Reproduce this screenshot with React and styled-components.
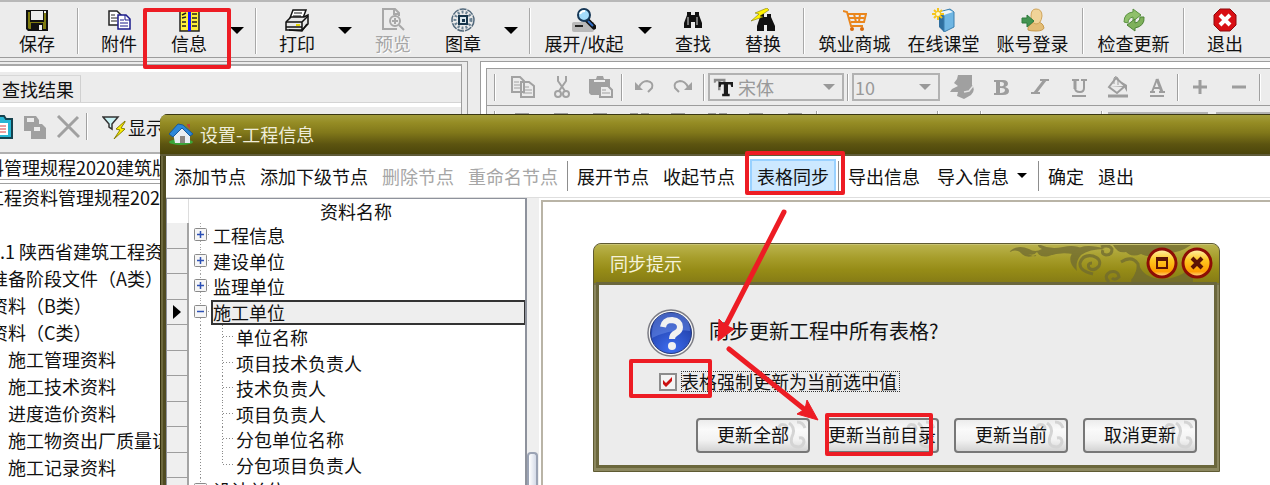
/**
 * Project archive editor with the "project info" settings window
 * and the table sync prompt opened on top of it
 */

import React, { useState } from 'react';
import styled, { createGlobalStyle, ThemeProvider, css } from 'styled-components';

const theme = {
  face: '#ececec',
  text: '#111111',
  muted: '#a6a6a6',
  line: '#9c9c9c',
  mark: '#ed1c24'
};

const GlobalStyle = createGlobalStyle`
  * {
    box-sizing: border-box;
  }

  body {
    margin: 0;
    background: ${theme.face};
  }

  body, button, select, input {
    font-family: "Noto Sans CJK SC", sans-serif;
    font-size: 18px;
    line-height: 22px;
    color: ${theme.text};
  }

  button {
    border: 0;
    padding: 0;
    background: none;
    white-space: nowrap;
  }

  svg {
    flex-shrink: 0;
  }
`;

const Desktop = styled.div`
  position: relative;
  display: flex;
  flex-direction: column;
  height: 100vh;
  overflow: hidden;
  background: ${props => props.theme.face};
`;

/* ---------- main toolbar ---------- */

const MainToolbar = styled.header`
  display: flex;
  flex-shrink: 0;
  padding: 6px 2px 3px;
  border-top: 2px solid #b8b8b8;
  border-bottom: 1px solid ${props => props.theme.line};
`;

const ToolButton = styled.button`
  display: flex;
  flex-direction: column;
  align-items: center;
  flex: 0 0 ${props => (props.$wide ? 89 : 70)}px;
  color: ${props => (props.disabled ? props.theme.muted : props.theme.text)};
  text-shadow: ${props => (props.disabled ? '1px 1px 0 #fff' : 'none')};
`;

const ExpandButton = styled(ToolButton)`
  flex-basis: 96px;
`;

const DropButton = styled.button`
  display: flex;
  align-items: center;
  justify-content: center;
  flex: 0 0 26px;
  height: 44px;
`;

const ToolSeparator = styled.span`
  flex: 0 0 2px;
  height: 46px;
  margin: 0 5px;
  background: #a8a8a8;
  border-right: 1px solid #fff;
`;

/* ---------- workspace behind the window ---------- */

const Workspace = styled.div`
  display: flex;
  flex: 1;
  min-height: 0;
  margin-top: 3px;
`;

const SidePanel = styled.aside`
  flex: 0 0 468px;
  display: flex;
  border: 1px solid ${props => props.theme.line};
  border-width: 1px 1px 0 0;
  padding: 2px 5px 0 0;
`;

const SideInner = styled.div`
  flex: 1;
  min-width: 0;
  border: 1px solid ${props => props.theme.line};
  border-width: 1px 1px 0 0;
  border-top: 2px solid #a8a8a8;
  padding-top: 6px;
  background: #fff;
`;

const TabRow = styled.div`
  display: flex;
  align-items: flex-end;
  height: 31px;
  background: ${props => props.theme.face};
  border-bottom: 1px solid #d4d4d4;
`;

const Tab = styled.button`
  width: 81px;
  height: 27px;
  padding-left: 2px;
  text-align: left;
  border-top: 1px solid #d8d8d8;
  border-right: 1px solid #d0d0d0;
`;

const SideTools = styled.div`
  display: flex;
  align-items: center;
  height: 47px;
  margin-top: 4px;
  padding-bottom: 6px;
  background: ${props => props.theme.face};
  border-bottom: 2px solid #b0b0b0;
`;

const SideTool = styled.button`
  display: flex;
  align-items: center;
  flex: 0 0 ${props => props.$width}px;
  gap: 2px;
`;

const FilterTool = styled(SideTool)`
  margin-left: 13px;
`;

const ClipWrap = styled.span`
  display: flex;
  justify-content: flex-end;
  width: 13px;
  overflow: hidden;
`;

const ThinSeparator = styled.span`
  flex: 0 0 4px;
  height: 27px;
  background: linear-gradient(to right, transparent 1px, #a0a0a0 1px, #a0a0a0 2px, #fff 2px, #fff 3px, transparent 3px);
`;

const CurrentBook = styled.div`
  height: 26px;
  line-height: 26px;
  text-indent: -14px;
  white-space: nowrap;
  border-bottom: 1px solid #a0a0a0;
`;

const ArchiveTree = styled.ul`
  list-style: none;
  margin: 3px 0 0;
  padding: 0;
  border-top: 1px solid #a0a0a0;
`;

const ArchiveItem = styled.li`
  height: 27px;
  line-height: 26px;
  text-indent: ${props => props.$indent}px;
  white-space: nowrap;
`;

const EditorPanel = styled.main`
  flex: 1;
  min-width: 0;
  margin-left: 12px;
  padding: 6px 0 0 5px;
  border: 1px solid ${props => props.theme.line};
  border-width: 1px 0 0 1px;
  background: #fff;
`;

const FormatBar = styled.div`
  display: flex;
  align-items: center;
  height: 37px;
  padding-left: 6px;
  overflow: hidden;
  border-top: 1px solid ${props => props.theme.line};
  border-left: 1px solid ${props => props.theme.line};
  background: ${props => props.theme.face};
`;

const Grip = styled(ThinSeparator)`
  margin-right: 6px;
`;

const FormatButton = styled.button`
  display: flex;
  justify-content: center;
  flex: 0 0 39px;
  color: #9d9d9d;
`;

const SelectBox = styled.label`
  display: flex;
  align-items: center;
  flex: 0 0 ${props => props.$width}px;
  height: 28px;
  margin: 0 2px;
  padding: 0 7px 0 ${props => props.$inset}px;
  border: 2px solid #b2b2b2;
  color: #999;
`;

const Select = styled.select`
  flex: 1;
  min-width: 0;
  margin-left: ${props => props.$gap}px;
  padding: 0;
  border: 0;
  appearance: none;
  background: none;
  color: #999;
  opacity: 1;
`;

const BlankField = styled.span`
  flex: 0 0 100px;
  height: 24px;
  margin: 0 4px;
  border: 2px solid #b2b2b2;
  background: #fff;
`;

/* ---------- settings window ---------- */

const SettingsWindow = styled.section`
  position: absolute;
  top: 114px;
  left: 160px;
  right: 0;
  bottom: 0;
  display: flex;
  flex-direction: column;
  overflow: hidden;
  padding-left: 6px;
  border-radius: 8px 0 0 0;
  background: linear-gradient(to right, #35310f 1px, #6d693f 1px, #6d693f 3px, #504c22 3px);
`;

const SettingsTitle = styled.h1`
  display: flex;
  align-items: center;
  gap: 7px;
  flex: 0 0 42px;
  margin: 0 0 0 -6px;
  padding: 0 0 2px 9px;
  font-size: 18px;
  font-weight: 400;
  color: #efedda;
  border-top: 1px solid #3a3712;
  border-bottom: 2px solid #5f5b38;
  background: linear-gradient(#a39d3c, #958c24 20%, #81781a 45%, #5c5410 75%, #4b450b);
`;

const SettingsTools = styled.nav`
  display: flex;
  align-items: center;
  flex: 0 0 42px;
  padding: 0 1px 2px;
  background: #fff;
  border-bottom: 1px solid #dedede;
`;

const NodeButton = styled.button`
  height: 33px;
  padding: 0 7px;
  flex-shrink: 0;
  color: ${props => (props.disabled ? props.theme.muted : props.theme.text)};

  ${props => props.$active && css`
    margin-left: 8px;
    background: #cce8ff;
    border: 2px solid #99d1ff;
    padding: 0 5px;
  `}
`;

const MenuButton = styled(NodeButton)`
  display: flex;
  align-items: center;
  gap: 8px;
  padding: 0 9px 0 10px;
`;

const NodeSeparator = styled.span`
  flex: 0 0 1px;
  height: 30px;
  margin: 0 2px;
  background: #8d8d8d;
`;

const SettingsBody = styled.div`
  display: flex;
  flex: 1;
  min-height: 0;
  background: #fff;
`;

const NodePanel = styled.div`
  flex: 0 0 361px;
  border-top: 1px solid #8e929c;
  border-right: 2px solid #8e929c;
  border-left: 1px solid #8e929c;
`;

const NodeHeader = styled.div`
  height: 24px;
  margin-left: 21px;
  padding-right: 2px;
  border-left: 1px solid #ddd;
  line-height: 24px;
  text-align: center;
`;

const NodeList = styled.ul`
  list-style: none;
  margin: 0;
  padding: 0;
`;

const NodeRow = styled.li`
  display: flex;
  align-items: stretch;
  height: 26px;

  &:nth-child(even) {
    height: 25px;
  }
`;

const RowMarker = styled.span`
  display: flex;
  align-items: center;
  justify-content: center;
  flex: 0 0 22px;
  background: #efefef;
  border-right: 2px solid #a4a4a4;
  border-bottom: 1px solid #9e9e9e;
`;

const Guide = styled.span`
  display: flex;
  flex: 0 0 ${props => (props.$child ? 45 : 22)}px;
  overflow: hidden;
`;

const NodeLabel = styled.span`
  flex: 1;
  line-height: 20px;
  white-space: nowrap;
  border: 2px solid ${props => (props.$selected ? '#333' : 'transparent')};
  border-width: 2px 1px 2px 2px;
  background: ${props => (props.$selected ? '#eeeeee' : 'transparent')};
`;

const Splitter = styled.div`
  display: flex;
  align-items: flex-end;
  flex: 0 0 12px;
  background: #efefef;
`;

const ScrollThumb = styled.span`
  width: 11px;
  height: 33px;
  border: 2px solid #9ba3b4;
  border-bottom: 0;
  border-radius: 4px 4px 0 0;
  background: linear-gradient(to right, #fff, #d5dbe8);
`;

const FormArea = styled.div`
  flex: 1;
  margin: 2px 0 0 2px;
  border: 2px solid #b9b4a6;
  border-width: 2px 0 0 2px;
`;

/* ---------- sync prompt ---------- */

const Prompt = styled.section`
  position: absolute;
  top: 243px;
  left: 593px;
  width: 627px;
  border: 1px solid #5f5b33;
  border-radius: 8px 8px 0 0;
  overflow: hidden;
  background: #8b875f;
`;

const PromptTitle = styled.header`
  display: flex;
  align-items: center;
  height: 41px;
  padding: 0 6px 2px 16px;
  border-top: 1px solid #c9c474;
  border-bottom: 2px solid #77724a;
  background: linear-gradient(#b9b24c, #a69d2a 35%, #968c17 65%, #857b15);
`;

const PromptName = styled.h2`
  margin: 0 auto 0 0;
  font-size: 18px;
  font-weight: 400;
  color: #f5f3da;
`;

const RoundButton = styled.button`
  display: flex;
  flex: 0 0 32px;
  margin-left: 3px;
  z-index: 1;
`;

const PromptBody = styled.div`
  display: flex;
  flex-direction: column;
  margin: 0 5px 6px;
  padding: 24px 17px 12px 48px;
  background: ${props => props.theme.face};
  box-shadow: 0 0 0 3px #6b673c;
`;

const PromptMessage = styled.div`
  display: flex;
  align-items: center;
  gap: 14px;
  height: 48px;
`;

const MessageText = styled.p`
  margin: 0;
  padding-bottom: 4px;
  font-size: 20px;
`;

const ForceOption = styled.label`
  display: flex;
  align-items: center;
  gap: 4px;
  margin: 14px 0 26px 12px;
`;

const ForceCheckbox = styled.input`
  width: 18px;
  height: 18px;
  margin: 0;
  appearance: none;
  border: 2px solid #8c8c8c;
  background: #f4f4f4;

  &:checked {
    background: #f4f4f4 url("data:image/svg+xml,%3Csvg xmlns='http://www.w3.org/2000/svg' viewBox='0 0 14 14'%3E%3Cpath d='M2 5l3 3 6-6v4l-6 6-3-3z' fill='%23cc1111'/%3E%3C/svg%3E") center / 14px no-repeat;
  }
`;

const ForceText = styled.span`
  outline: 1px dotted #333;
  outline-offset: -1px;
  padding-right: 3px;
  height: 21px;
  line-height: 20px;
`;

const PromptActions = styled.div`
  display: flex;
  justify-content: flex-end;
  gap: 15px;
`;

const ActionButton = styled.button`
  display: flex;
  align-items: center;
  justify-content: center;
  position: relative;
  flex: 0 0 114px;
  height: 35px;
  padding-bottom: 3px;
  border: 2px solid #777;
  border-radius: 4px;
  background: linear-gradient(#ececec, #fafafa 30%, #f2f2f2 65%, #d4d4d4);

  svg {
    position: absolute;
    right: 0;
    top: 0;
  }

  span {
    position: relative;
    margin: 0 -4px;
  }
`;

const Marks = styled.svg`
  position: absolute;
  top: 0;
  left: 0;
  pointer-events: none;
`;

const TitleOrnament = styled.svg`
  margin-right: -66px;
`;

/* ---------- icons ---------- */

const Icon = ({ size = 24, children }) => (
  <svg width={size} height={size} viewBox="0 0 24 24" fill="none" aria-hidden="true">
    {children}
  </svg>
);

const SaveIcon = () => (
  <Icon>
    <path d="M1 2h22v21H3l-2-2z" fill="#111" />
    <path d="M3 4h2v10h14V4h2v17h-3v-6H6v6H4l-1-1z" fill="#807c10" />
    <path d="M6 3h12v9H6z" fill="#ececec" />
    <path d="M19 3h2v2h-2z" fill="#eee" />
    <path d="M14 17h3v5h-3z" fill="#eee" />
  </Icon>
);

const AttachIcon = () => (
  <Icon>
    <path d="M2 3h8l4 4v10H2z" fill="#fff" stroke="#222" strokeWidth="1.5" />
    <path d="M4 7h4M4 10h7M4 13h6" stroke="#222" />
    <path d="M11 7h8l4 4v10H11z" fill="#fff" stroke="#1b1b8c" strokeWidth="1.5" />
    <path d="M18 7v5h5M13 12h4M13 15h8M13 18h8" stroke="#1b1b8c" />
  </Icon>
);

const InfoIcon = () => (
  <Icon>
    <path d="M3 2l6-1h8l5 1v21H3z" fill="#ffef38" stroke="#222" strokeWidth="1.5" />
    <path d="M5 7l4-2M5 10l4-1M5 14h4M5 18h4M15 6h5M15 10h5M15 14h5M15 18h5" stroke="#222" strokeWidth="1.5" />
    <path d="M11 1h3v22h-3z" fill="#1414ff" />
  </Icon>
);

const PrintIcon = () => (
  <Icon>
    <path d="M8 2h13l-3 8H5z" fill="#fff" stroke="#111" strokeWidth="1.5" />
    <path d="M9 5h8M8 8h8" stroke="#111" />
    <path d="M1 14l5-5h13l4-2v9l-6 6H1z" fill="#e8e8e8" stroke="#111" strokeWidth="1.5" />
    <path d="M1 14h16l6-6M1 19h16M17 14v8M4 22l13 1 5-7" stroke="#111" strokeWidth="1.5" />
    <path d="M11 16h4v2h-4z" fill="#e5d500" />
  </Icon>
);

const PreviewIcon = () => (
  <Icon>
    <path d="M18 8V5l-4-4H2v20h14M13 1v5h5" stroke="#a8a8a8" strokeWidth="2" />
    <circle cx="14" cy="13" r="5" stroke="#a8a8a8" strokeWidth="2" />
    <path d="M14 10v6M11 13h6M18 17l5 5" stroke="#a8a8a8" strokeWidth="2" />
  </Icon>
);

const SealIcon = () => (
  <Icon>
    <circle cx="12" cy="12" r="11" stroke="#52697c" strokeWidth="1.5" strokeDasharray="7 1" />
    <circle cx="12" cy="12" r="8" stroke="#6c8394" strokeWidth="3" strokeDasharray="2 2" />
    <path d="M8 8h8v8H8z" fill="#dce8ee" stroke="#18364c" strokeWidth="2" />
    <path d="M11 11h3v3h-3z" fill="#18364c" />
  </Icon>
);

const ExpandIcon = () => (
  <Icon>
    <path d="M2 14h20v8q0 2-2 2H2q-2 0-2-2v-6q0-2 2-2z" fill="#b9b9b9" />
    <path d="M3 18h8" stroke="#222" strokeWidth="2" />
    <path d="M15 12l7 7" stroke="#111" strokeWidth="5" strokeLinecap="round" />
    <path d="M16 13l5 5" stroke="#3270c8" strokeWidth="2" />
    <circle cx="12" cy="7" r="6" fill="#a4dcfb" stroke="#173857" strokeWidth="2" />
    <path d="M8 6q1-3 5-3" stroke="#fff" strokeWidth="2" />
  </Icon>
);

const FindIcon = () => (
  <Icon>
    <path d="M6 4h4v3h4V4h4v3l3 8v5h-7v-6h-4v6H3v-5l3-8z" fill="#111" />
    <path d="M7 9v8M16 9v8" stroke="#ddd" />
  </Icon>
);

const ReplaceIcon = () => (
  <Icon>
    <path d="M9 6h4v3h3V6h4v3l4 9v5h-8v-6h-3v6H6v-5l3-9z" fill="#111" />
    <path d="M16 0L4 5l4 1-8 7 12-4-3-1 9-6z" fill="#fff200" stroke="#6b6400" strokeWidth=".5" />
  </Icon>
);

const CartIcon = () => (
  <Icon>
    <path d="M0 3l4 1 4 14h12M5 6h18l-2 8H8M6 10h15M11 6l2 8M17 6l-1 8" stroke="#ea861c" strokeWidth="2" />
    <circle cx="9" cy="21" r="2" fill="#d96b0c" />
    <circle cx="19" cy="21" r="2" fill="#d96b0c" />
  </Icon>
);

const ClassIcon = () => (
  <Icon>
    <path d="M7 4l5 4v16l-5-5z" fill="#2f6f9f" />
    <path d="M7 4l11-3 4 3v15l-10 5V8z" fill="#6fb6e3" stroke="#3b7fad" />
    <path d="M8 4l9-2 4 2-9 3z" fill="#eef6fa" />
    <path d="M6 0v12M0 6h12M2 2l8 8M10 2l-8 8" stroke="#f5c51d" strokeWidth="2" />
    <circle cx="6" cy="6" r="2" fill="#fffbd0" />
  </Icon>
);

const AccountIcon = () => (
  <Icon>
    <path d="M7 22q-1-4 6-8 9-1 10 6-1 3-8 3-6 0-8-1z" fill="#e3bd75" stroke="#c79a4d" />
    <path d="M15 1q6 0 6 7-1 8-6 8-5-1-5-8 0-7 5-7z" fill="#f1d398" stroke="#d0a55b" />
    <path d="M1 10h5V7l7 6-7 6v-4H1z" fill="#439451" stroke="#2f7b3c" />
  </Icon>
);

const UpdateIcon = () => (
  <Icon>
    <path d="M2 14q0-9 9-10V1l8 6-8 6v-4q-5 1-5 6z" fill="#8fc06a" stroke="#5a9240" />
    <path d="M22 9q1 9-9 11v3l-8-6 8-6v4q5-1 5-6z" fill="#7eb05a" stroke="#4d8336" />
  </Icon>
);

const ExitIcon = () => (
  <Icon>
    <path d="M7 1h10l6 6v10l-6 6H7l-6-6V7z" fill="#d80f14" stroke="#8d0a0d" />
    <path d="M7 7l10 10M17 7L7 17" stroke="#fff" strokeWidth="4" />
  </Icon>
);

const Caret = ({ width = 14, color = '#000' }) => (
  <svg width={width} height={width / 2} viewBox="0 0 14 7" aria-hidden="true">
    <path d="M0 0h14L7 7z" fill={color} />
  </svg>
);

const HouseIcon = () => (
  <Icon>
    <ellipse cx="12" cy="20" rx="12" ry="3" fill="#3aa63a" />
    <path d="M4 11l9-7 8 8v9H6z" fill="#e9edf2" />
    <path d="M0 12L9 2l5 1 10 9-3 2-8-8-9 9z" fill="#2c87d8" stroke="#195a9b" />
    <path d="M11 14h5v7h-5z" fill="#8b8580" />
    <path d="M18 2h3v5l-3-3z" fill="#bb4b33" />
  </Icon>
);

const QuestionIcon = () => (
  <svg width="48" height="48" viewBox="0 0 48 48" aria-hidden="true">
    <defs>
      <radialGradient id="ball" cx="50%" cy="90%" r="90%">
        <stop offset="0" stopColor="#3e6df0" />
        <stop offset="1" stopColor="#1b3699" />
      </radialGradient>
    </defs>
    <circle cx="24" cy="24" r="23" fill="#f5f5f5" stroke="#7d7d85" strokeWidth="1.5" />
    <circle cx="24" cy="24" r="20.5" fill="url(#ball)" stroke="#26397c" />
    <path d="M5 25Q5 4 24 4t19 18Q26 19 5 29z" fill="#7ea0f5" opacity=".4" />
    <path d="M16 18q1-7 9-7 8 1 8 7 0 4-4 6-4 2-4 6" fill="none" stroke="#f1f1f1" strokeWidth="6" />
    <circle cx="25" cy="37" r="4" fill="#f1f1f1" />
  </svg>
);

const CopyGray = () => (
  <Icon>
    <path d="M1 2h8l4 4v11H1zM10 7h8l5 4v11H10z" fill="#ececec" stroke="#a2a2a2" strokeWidth="2" />
    <path d="M3 7h5M3 10h6M3 13h6M12 12h6M12 15h9M12 18h9" stroke="#a2a2a2" />
  </Icon>
);

const CutGray = () => (
  <Icon>
    <path d="M8 1v5l7 10M16 1v5L9 16" stroke="#a2a2a2" strokeWidth="2" />
    <circle cx="8" cy="19" r="3" stroke="#a2a2a2" strokeWidth="2" />
    <circle cx="16" cy="19" r="3" stroke="#a2a2a2" strokeWidth="2" />
  </Icon>
);

const PasteGray = () => (
  <Icon>
    <path d="M0 4h7l1-3h6l1 3h6v16H2l-2-2z" fill="#a0a0a0" />
    <path d="M5 6h11" stroke="#eee" strokeWidth="2" />
    <path d="M11 11h8l4 4v7H11z" fill="#ececec" stroke="#a0a0a0" strokeWidth="2" />
    <path d="M13 15h4M13 18h8" stroke="#a0a0a0" />
  </Icon>
);

const UndoGray = () => (
  <Icon>
    <path d="M3 7v8h8z" fill="#a0a0a0" />
    <path d="M7 12q3-6 8-6 7 1 5 7l-4 4" stroke="#a0a0a0" strokeWidth="2" />
  </Icon>
);

const RedoGray = () => (
  <Icon>
    <path d="M21 7v8h-8z" fill="#a0a0a0" />
    <path d="M17 12q-3-6-8-6-7 1-5 7l4 4" stroke="#a0a0a0" strokeWidth="2" />
  </Icon>
);

const FontIcon = () => (
  <Icon size={20}>
    <path d="M1 2h14v5h-2l-1-2H9v11H6V5H4L3 7H1z" fill="#8b8b8b" />
    <path d="M7 6h17v6h-2l-1-3h-3v11h2v3h-9v-3h2V9h-3l-1 3H7z" fill="#1c1c1c" />
  </Icon>
);

const BrushGray = () => (
  <Icon>
    <path d="M8 0h14v10q4 5-1 10l-7 4-7-3 1-4H0l2-3 6-3-4-3 3-4z" fill="#a0a0a0" />
    <path d="M14 17l5-1 4-5" stroke="#e4e4e4" strokeWidth="1.5" />
  </Icon>
);

const BoldGray = () => (
  <Icon>
    <path d="M5 5h9q5 0 5 4 0 2-3 3 4 1 4 4 0 4-6 4H5v-2h2V7H5z" fill="#9d9d9d" />
    <path d="M11 7h1q3 0 3 2 0 3-4 2zM11 13h1q4 0 4 2 0 3-5 3z" fill="#ececec" />
  </Icon>
);

const ItalicGray = () => (
  <Icon>
    <path d="M12 5h9M3 18h9" stroke="#9d9d9d" strokeWidth="2" />
    <path d="M17 5L7 18" stroke="#9d9d9d" strokeWidth="3" />
  </Icon>
);

const UnderlineGray = () => (
  <Icon>
    <path d="M5 5h7M14 5h6M17 5v8q0 4-4 4-5 0-5-4M5 21h14" stroke="#9d9d9d" strokeWidth="2" />
    <path d="M8 5v9" stroke="#9d9d9d" strokeWidth="3" />
  </Icon>
);

const BucketGray = () => (
  <Icon>
    <path d="M10 3l9 8-8 7-8-6z" fill="#ececec" stroke="#9d9d9d" strokeWidth="2" />
    <path d="M8 9V3q1-3 4 0v7" stroke="#9d9d9d" />
    <path d="M4 12h14l3 5V10l-5-3 2 4z" fill="#9d9d9d" />
    <path d="M2 21h20" stroke="#9d9d9d" strokeWidth="3" />
  </Icon>
);

const ColorGray = () => (
  <Icon>
    <path d="M7 17l5-13M8 13h8M5 17h5M14 17h6M5 21h14" stroke="#9d9d9d" strokeWidth="2" />
    <path d="M12 4l5 13" stroke="#9d9d9d" strokeWidth="3" />
  </Icon>
);

const PlusGray = () => (
  <Icon><path d="M12 5v14M5 12h14" stroke="#9d9d9d" strokeWidth="3" /></Icon>
);

const MinusGray = () => (
  <Icon><path d="M5 12h14" stroke="#9d9d9d" strokeWidth="3" /></Icon>
);

const AlignGray = () => (
  <Icon>
    <path d="M4 2h14M7 7h8M4 12h14M7 17h8" stroke="#9d9d9d" strokeWidth="2" />
  </Icon>
);

const CellsGray = () => (
  <Icon>
    <path d="M3 2h6v6H3zM14 2h6v6h-6zM3 13h17v7H3z" stroke="#9d9d9d" strokeWidth="2" />
  </Icon>
);

const ClipboardIcon = () => (
  <Icon>
    <path d="M1 4h6l2-3h6l2 3h6v19H1z" fill="#27b6d4" stroke="#15424e" strokeWidth="2" />
    <path d="M5 8h14v12H5z" fill="#fff" />
    <path d="M7 11h10M7 14h10M7 17h10" stroke="#d84040" />
  </Icon>
);

const CopyStackGray = () => (
  <Icon>
    <path d="M1 1h12l3 4v11H1zM8 9h11l4 4v11H8z" fill="#a0a0a0" />
    <path d="M4 3h7v4H4zM11 12h6v4h-6z" fill="#ececec" />
  </Icon>
);

const DeleteGray = () => (
  <Icon><path d="M2 1l21 21M22 2L2 22" stroke="#a0a0a0" strokeWidth="3" /></Icon>
);

const FilterIcon = () => (
  <Icon>
    <path d="M1 2h15l-6 7v5l-3-2V9z" fill="#c9f2f5" stroke="#333" strokeWidth="1.5" />
    <path d="M23 6l-9 8 4 1-6 9 11-10-4-1 4-6z" fill="#fff200" stroke="#857c00" />
  </Icon>
);

const Expander = ({ open }) => (
  <svg width="23" height="26" viewBox="0 0 23 26" aria-hidden="true">
    <path d="M11.500 0v26M19 11.500h4" stroke="#a5a5a5" strokeDasharray="1 2" />
    <rect x="5.500" y="5.500" width="12" height="12" rx="1" fill="#f6f6f6" stroke="#8a8a8a" />
    <path d={open ? 'M8 11.500h7' : 'M8 11.500h7M11.500 8v7'} stroke="#2c50b5" strokeWidth="1.5" />
  </svg>
);

const ChildGuide = ({ last }) => (
  <svg width="46" height="26" viewBox="0 0 46 26" aria-hidden="true">
    <path d={`M11.500 0v26M33.500 0v${last ? 12 : 26}M34 11.500h11`} stroke="#8a8a8a" strokeDasharray="1 2" />
  </svg>
);

const ActionScroll = () => (
  <svg width="34" height="31" viewBox="0 0 34 31" fill="none" aria-hidden="true">
    <path d="M5 9q0-6 6-4 4 3 0 7M15 3q6 4 4 11-4 9 1 12 8 3 10-4 0-5-5-4M23 2q6 0 8 6" stroke="#d4d4d4" strokeWidth="3" />
  </svg>
);

const Ornament = () => (
  <TitleOrnament width="200" height="37" viewBox="0 0 200 37" fill="none" aria-hidden="true">
    <g opacity=".75">
      <path d="M0 7Q8-1 20 4q6 4 13 0-6-3-3-5 10 6 24 3 12-3 20 2-3 5-10 5-14-2-24 2-9 2-12-4-3 4-9 2 9 4 8 1-9 4-14-1Q8 3 0 7z" fill="#6f6a30" />
      <path d="M68 26q-11-10-4-19Q74-3 96 4q-16 0-24 6-6 7-4 16z" fill="#6f6a30" />
      <path d="M84 29q-14-3-13-11 3-9 13-7 9 3 6 10-5 6-10 2-2-5 3-5" stroke="#6f6a30" strokeWidth="3" />
      <path d="M92 2q8-3 11 2 0 6-6 6-5-1-3-5M112 17q11-7 17 2 1 10-6 17M100 37q-6-6 1-10 8-2 9 5-4 4-7 1" stroke="#6f6a30" strokeWidth="3" />
      <path d="M104 0h78q-14 10-30 8-10 6-20 1-9 4-15-2-8 2-13-7z" fill="#6f6a30" />
      <path d="M130 20q5 13 22 14 20 0 32-14v17h-62z" fill="#6f6a30" />
    </g>
  </TitleOrnament>
);

const RoundFace = ({ children }) => (
  <svg width="32" height="32" viewBox="0 0 32 32" fill="none" aria-hidden="true">
    <defs>
      <linearGradient id="gold" x1="0" y1="0" x2="0" y2="1">
        <stop offset="0" stopColor="#fff3b0" />
        <stop offset=".4" stopColor="#ffc720" />
        <stop offset=".8" stopColor="#ff9d00" />
        <stop offset="1" stopColor="#ffe39a" />
      </linearGradient>
    </defs>
    <circle cx="16" cy="16" r="14" fill="url(#gold)" stroke="#8d0d05" strokeWidth="3" />
    {children}
  </svg>
);

/* ---------- data ---------- */

const ARCHIVE_ROWS = [
  { text: '工程资料管理规程2020', indent: -14 },
  { text: '', indent: 0 },
  { text: '1.1 陕西省建筑工程资料', indent: -10 },
  { text: '准备阶段文件（A类）', indent: -10 },
  { text: '资料（B类）', indent: -10 },
  { text: '资料（C类）', indent: -10 },
  { text: '施工管理资料', indent: 8 },
  { text: '施工技术资料', indent: 8 },
  { text: '进度造价资料', indent: 8 },
  { text: '施工物资出厂质量证明', indent: 8 },
  { text: '施工记录资料', indent: 8 }
];

const NODES = [
  { text: '工程信息' },
  { text: '建设单位' },
  { text: '监理单位' },
  { text: '施工单位', open: true },
  { text: '单位名称', child: true },
  { text: '项目技术负责人', child: true },
  { text: '技术负责人', child: true },
  { text: '项目负责人', child: true },
  { text: '分包单位名称', child: true },
  { text: '分包项目负责人', child: true, last: true },
  { text: '设计单位' }
];

const ACTIONS = ['更新全部', '更新当前目录', '更新当前', '取消更新'];

const Drop = ({ label }) => (
  <DropButton aria-label={label}><Caret /></DropButton>
);

const TopBar = () => (
  <MainToolbar>
    <ToolButton><SaveIcon />保存</ToolButton>
    <ToolSeparator />
    <ToolButton><AttachIcon />附件</ToolButton>
    <ToolButton><InfoIcon />信息</ToolButton>
    <Drop label="信息" />
    <ToolSeparator />
    <ToolButton><PrintIcon />打印</ToolButton>
    <Drop label="打印" />
    <ToolButton disabled><PreviewIcon />预览</ToolButton>
    <ToolButton><SealIcon />图章</ToolButton>
    <Drop label="图章" />
    <ToolSeparator />
    <ExpandButton><ExpandIcon />展开/收起</ExpandButton>
    <Drop label="展开/收起" />
    <ToolButton><FindIcon />查找</ToolButton>
    <ToolButton><ReplaceIcon />替换</ToolButton>
    <ToolSeparator />
    <ToolButton $wide><CartIcon />筑业商城</ToolButton>
    <ToolButton $wide><ClassIcon />在线课堂</ToolButton>
    <ToolButton $wide><AccountIcon />账号登录</ToolButton>
    <ToolSeparator />
    <ToolButton $wide><UpdateIcon />检查更新</ToolButton>
    <ToolSeparator />
    <ToolButton><ExitIcon />退出</ToolButton>
  </MainToolbar>
);

const ArchivePanel = () => (
  <SidePanel>
    <SideInner>
      <TabRow><Tab>查找结果</Tab></TabRow>
      <SideTools>
        <SideTool $width={23} aria-label="粘贴">
          <ClipWrap><ClipboardIcon /></ClipWrap>
        </SideTool>
        <SideTool $width={33} aria-label="复制" disabled><CopyStackGray /></SideTool>
        <SideTool $width={29} aria-label="删除" disabled><DeleteGray /></SideTool>
        <ThinSeparator />
        <FilterTool $width={80}><FilterIcon />显示</FilterTool>
      </SideTools>
      <CurrentBook>料管理规程2020建筑版</CurrentBook>
      <ArchiveTree>
        {ARCHIVE_ROWS.map((row, index) => (
          <ArchiveItem key={index} $indent={row.indent}>{row.text}</ArchiveItem>
        ))}
      </ArchiveTree>
    </SideInner>
  </SidePanel>
);

const Editor = () => (
  <EditorPanel>
    <FormatBar>
      <Grip />
      <FormatButton aria-label="复制" disabled><CopyGray /></FormatButton>
      <FormatButton aria-label="剪切" disabled><CutGray /></FormatButton>
      <FormatButton aria-label="粘贴" disabled><PasteGray /></FormatButton>
      <ThinSeparator />
      <FormatButton aria-label="撤销" disabled><UndoGray /></FormatButton>
      <FormatButton aria-label="重做" disabled><RedoGray /></FormatButton>
      <ThinSeparator />
      <SelectBox $width={136} $inset={3}>
        <FontIcon />
        <Select $gap={5} aria-label="字体" disabled><option>宋体</option></Select>
        <Caret width={12} color="#999" />
      </SelectBox>
      <ThinSeparator />
      <SelectBox $width={88} $inset={1}>
        <Select $gap={0} aria-label="字号" disabled><option>10</option></Select>
        <Caret width={12} color="#999" />
      </SelectBox>
      <FormatButton aria-label="格式刷" disabled><BrushGray /></FormatButton>
      <FormatButton aria-label="加粗" disabled><BoldGray /></FormatButton>
      <FormatButton aria-label="斜体" disabled><ItalicGray /></FormatButton>
      <FormatButton aria-label="下划线" disabled><UnderlineGray /></FormatButton>
      <FormatButton aria-label="填充" disabled><BucketGray /></FormatButton>
      <FormatButton aria-label="颜色" disabled><ColorGray /></FormatButton>
      <ThinSeparator />
      <FormatButton aria-label="增加" disabled><PlusGray /></FormatButton>
      <FormatButton aria-label="减少" disabled><MinusGray /></FormatButton>
      <ThinSeparator />
    </FormatBar>
    <FormatBar>
      <Grip />
      {['左', '中', '右'].map(name => (
        <FormatButton key={name} aria-label={name} disabled><AlignGray /></FormatButton>
      ))}
      <FormatButton aria-label="合并" disabled><CellsGray /></FormatButton>
      <FormatButton aria-label="行" disabled><AlignGray /></FormatButton>
      <FormatButton aria-label="拆分" disabled><CellsGray /></FormatButton>
      <FormatButton aria-label="列" disabled><AlignGray /></FormatButton>
      <FormatButton aria-label="边框" disabled><AlignGray /></FormatButton>
      <ThinSeparator />
      {['一', '二', '三'].map(name => (
        <FormatButton key={name} aria-label={name} disabled><PlusGray /></FormatButton>
      ))}
      <ThinSeparator />
      <FormatButton aria-label="插入" disabled><PlusGray /></FormatButton>
      <ThinSeparator />
      <FormatButton aria-label="公式" disabled><MinusGray /></FormatButton>
      <FormatButton aria-label="图形" disabled><MinusGray /></FormatButton>
      <FormatButton aria-label="批注" disabled><MinusGray /></FormatButton>
      <ThinSeparator />
      <BlankField />
      <BlankField />
    </FormatBar>
  </EditorPanel>
);

const Settings = () => {
  const [selected, setSelected] = useState('施工单位');

  return (
    <SettingsWindow>
      <SettingsTitle><HouseIcon />设置-工程信息</SettingsTitle>
      <SettingsTools>
        <NodeButton>添加节点</NodeButton>
        <NodeButton>添加下级节点</NodeButton>
        <NodeButton disabled>删除节点</NodeButton>
        <NodeButton disabled>重命名节点</NodeButton>
        <NodeSeparator />
        <NodeButton>展开节点</NodeButton>
        <NodeButton>收起节点</NodeButton>
        <NodeButton $active>表格同步</NodeButton>
        <NodeSeparator />
        <NodeButton>导出信息</NodeButton>
        <MenuButton>导入信息<Caret width={10} /></MenuButton>
        <NodeSeparator />
        <NodeButton>确定</NodeButton>
        <NodeButton>退出</NodeButton>
      </SettingsTools>
      <SettingsBody>
        <NodePanel>
          <NodeHeader>资料名称</NodeHeader>
          <NodeList>
            {NODES.map(node => (
              <NodeRow key={node.text} onClick={() => setSelected(node.text)}>
                <RowMarker>
                  {selected === node.text && (
                    <svg width="8" height="14" viewBox="0 0 8 14" aria-hidden="true">
                      <path d="M0 0l8 7-8 7z" fill="#000" />
                    </svg>
                  )}
                </RowMarker>
                <Guide $child={node.child}>
                  {node.child ? <ChildGuide last={node.last} /> : <Expander open={node.open} />}
                </Guide>
                <NodeLabel $selected={selected === node.text}>{node.text}</NodeLabel>
              </NodeRow>
            ))}
          </NodeList>
        </NodePanel>
        <Splitter><ScrollThumb /></Splitter>
        <FormArea />
      </SettingsBody>
    </SettingsWindow>
  );
};

const SyncPrompt = () => {
  const [force, setForce] = useState(true);

  return (
    <Prompt role="dialog" aria-label="同步提示">
      <PromptTitle>
        <PromptName>同步提示</PromptName>
        <Ornament />
        <RoundButton aria-label="最大化">
          <RoundFace>
            <path d="M11 11h10v10H11z" stroke="#5c1405" strokeWidth="2" />
            <path d="M10 10h12v4H10z" fill="#5c1405" />
          </RoundFace>
        </RoundButton>
        <RoundButton aria-label="关闭">
          <RoundFace>
            <path d="M11 11l10 10M21 11L11 21" stroke="#5c1405" strokeWidth="4" />
          </RoundFace>
        </RoundButton>
      </PromptTitle>
      <PromptBody>
        <PromptMessage>
          <QuestionIcon />
          <MessageText>同步更新工程中所有表格?</MessageText>
        </PromptMessage>
        <ForceOption>
          <ForceCheckbox type="checkbox" checked={force} onChange={e => setForce(e.target.checked)} />
          <ForceText>表格强制更新为当前选中值</ForceText>
        </ForceOption>
        <PromptActions>
          {ACTIONS.map(label => (
            <ActionButton key={label}><ActionScroll /><span>{label}</span></ActionButton>
          ))}
        </PromptActions>
      </PromptBody>
    </Prompt>
  );
};

const Annotations = () => (
  <Marks width="1270" height="485" viewBox="0 0 1270 485" fill="none" stroke={theme.mark} aria-hidden="true">
    <g strokeWidth="4" strokeLinejoin="round">
      <rect x="145" y="10" width="84" height="57" />
      <rect x="747" y="153" width="96" height="40" />
      <rect x="631" y="361" width="79" height="35" />
      <rect x="827" y="415" width="104" height="39" />
    </g>
    <path d="M784 212L724 329M729 349l75 60" strokeWidth="5" strokeLinecap="round" />
    <path d="M718 341l1-22 6 6 9 4zM818 420l-21-6 8-5 2-9z" fill={theme.mark} strokeWidth="1" />
  </Marks>
);

const App = () => (
  <ThemeProvider theme={theme}>
    <GlobalStyle />
    <Desktop>
      <TopBar />
      <Workspace>
        <ArchivePanel />
        <Editor />
      </Workspace>
      <Settings />
      <SyncPrompt />
      <Annotations />
    </Desktop>
  </ThemeProvider>
);

export default App;
